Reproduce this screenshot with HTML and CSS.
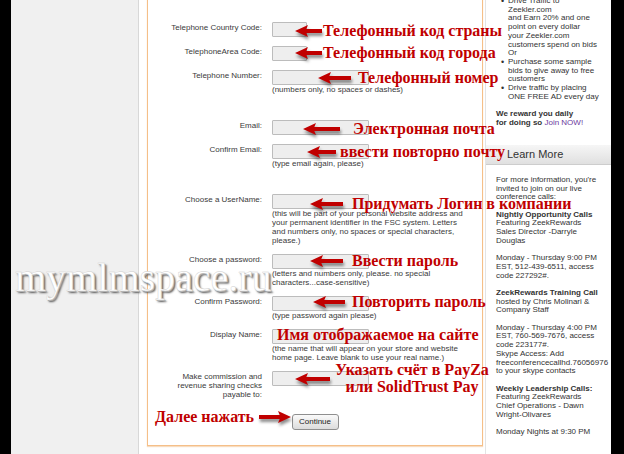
FILE: index.html
```html
<!DOCTYPE html>
<html lang="ru">
  <head>
    <meta charset="UTF-8" />
    <meta name="viewport" content="width=device-width, initial-scale=1.0" />
    <title>Регистрация</title>
    <link rel="stylesheet" href="styles.css">
  </head>
  <body>
    <div class="page">
      <div class="edge"></div>
      <div class="leftcol"></div>

      <div class="main">
        <form class="signup">
          <div class="row">
            <label>Telephone Country Code:</label>
            <div class="field"><input class="short" type="text" /></div>
          </div>
          <div class="row">
            <label>TelephoneArea Code:</label>
            <div class="field"><input class="short" type="text" /></div>
          </div>
          <div class="row spaced">
            <label>Telephone Number:</label>
            <div class="field">
              <input type="text" />
              <div class="hint">(numbers only, no spaces or dashes)</div>
            </div>
          </div>
          <div class="row">
            <label>Email:</label>
            <div class="field"><input type="text" /></div>
          </div>
          <div class="row spaced">
            <label>Confirm Email:</label>
            <div class="field">
              <input type="text" />
              <div class="hint">(type email again, please)</div>
            </div>
          </div>
          <div class="row">
            <label>Choose a UserName:</label>
            <div class="field">
              <input type="text" />
              <div class="hint">(this will be part of your personal website address and<br>your permanent identifier in the FSC system. Letters<br>and numbers only, no spaces or special characters,<br>please.)</div>
            </div>
          </div>
          <div class="row">
            <label>Choose a password:</label>
            <div class="field">
              <input type="password" />
              <div class="hint">(letters and numbers only, please. no special<br>characters...case-sensitive)</div>
            </div>
          </div>
          <div class="row">
            <label>Confirm Password:</label>
            <div class="field">
              <input type="password" />
              <div class="hint">(type password again please)</div>
            </div>
          </div>
          <div class="row">
            <label>Display Name:</label>
            <div class="field">
              <input type="text" />
              <div class="hint">(the name that will appear on your store and website<br>home page. Leave blank to use your real name.)</div>
            </div>
          </div>
          <div class="row last">
            <label>Make commission and<br>revenue sharing checks<br>payable to:</label>
            <div class="field"><input type="text" /></div>
          </div>
          <div class="actions">
            <button type="button">Continue</button>
          </div>
        </form>
      </div>

      <div class="sidebar">
        <ul class="perks">
          <li>Drive Traffic to<br>Zeekler.com<br>and Earn 20% and one<br>point on every dollar<br>your Zeekler.com<br>customers spend on bids<br>Or</li>
          <li>Purchase some sample<br>bids to give away to free<br>customers</li>
          <li>Drive traffic by placing<br>ONE FREE AD every day</li>
        </ul>
        <p class="reward">We reward you daily<br>for doing so <a href="#">Join NOW!</a></p>

        <div class="learn">Learn More</div>
        <div class="calls">
          <p>For more information, you're<br>invited to join on our live<br>conference calls:</p>
          <p><b>Nightly Opportunity Calls</b><br>Featuring ZeekRewards<br>Sales Director -Darryle<br>Douglas</p>
          <p>Monday - Thursday 9:00 PM<br>EST, 512-439-6511, access<br>code 227292#.</p>
          <p class="gap"><b>ZeekRewards Training Call</b><br>hosted by Chris Molinari &amp;<br>Company Staff</p>
          <p>Monday - Thursday 4:00 PM<br>EST, 760-569-7676, access<br>code 223177#.<br>Skype Access: Add<br>freeconferencecallhd.76056976<br>to your skype contacts</p>
          <p class="gap"><b>Weekly Leadership Calls:</b><br>Featuring ZeekRewards<br>Chief Operations - Dawn<br>Wright-Olivares</p>
          <p>Monday Nights at 9:30 PM</p>
        </div>
      </div>

      <div class="edge edge-right"></div>

      <!-- подсказки поверх формы -->
      <div class="note n1"><div class="arrow"><svg class="head" viewBox="0 0 13 12"><polygon points="0,6 13,0 10.5,6 13,12" /></svg><div class="shaft"></div></div><span>Телефонный код страны</span></div>
      <div class="note n2"><div class="arrow"><svg class="head" viewBox="0 0 13 12"><polygon points="0,6 13,0 10.5,6 13,12" /></svg><div class="shaft"></div></div><span>Телефонный код города</span></div>
      <div class="note n3"><div class="arrow"><svg class="head" viewBox="0 0 13 12"><polygon points="0,6 13,0 10.5,6 13,12" /></svg><div class="shaft"></div></div><span>Телефонный номер</span></div>
      <div class="note n4"><div class="arrow"><svg class="head" viewBox="0 0 13 12"><polygon points="0,6 13,0 10.5,6 13,12" /></svg><div class="shaft"></div></div><span>Электронная почта</span></div>
      <div class="note n5"><div class="arrow"><svg class="head" viewBox="0 0 13 12"><polygon points="0,6 13,0 10.5,6 13,12" /></svg><div class="shaft"></div></div><span>ввести повторно почту</span></div>
      <div class="note n6"><div class="arrow"><svg class="head" viewBox="0 0 13 12"><polygon points="0,6 13,0 10.5,6 13,12" /></svg><div class="shaft"></div></div><span>Придумать Логин в компании</span></div>
      <div class="note n7"><div class="arrow"><svg class="head" viewBox="0 0 13 12"><polygon points="0,6 13,0 10.5,6 13,12" /></svg><div class="shaft"></div></div><span>Ввести пароль</span></div>
      <div class="note n8"><div class="arrow"><svg class="head" viewBox="0 0 13 12"><polygon points="0,6 13,0 10.5,6 13,12" /></svg><div class="shaft"></div></div><span>Повторить пароль</span></div>
      <div class="note n9"><span>Имя отображаемое на сайте</span></div>
      <div class="note n10"><div class="arrow"><svg class="head" viewBox="0 0 13 12"><polygon points="0,6 13,0 10.5,6 13,12" /></svg><div class="shaft"></div></div></div>
      <div class="note-block">Указать счёт в PayZa<br>или SolidTrust Pay</div>
      <div class="note n11"><span>Далее нажать</span><div class="arrow right"><svg class="head" viewBox="0 0 13 12"><polygon points="0,6 13,0 10.5,6 13,12" /></svg><div class="shaft"></div></div></div>

      <div class="watermark">mymlmspace.ru</div>
    </div>
  </body>
</html>
```

FILE: styles.css
```css
/* General styles */
* {
  box-sizing: border-box;
}

html,
body {
  margin: 0;
  padding: 0;
}

body {
  font-family: "Liberation Sans", Arial, sans-serif;
  background-color: white;
  color: #333;
}

.page {
  position: relative;
  display: flex;
  height: 454px;
  overflow: hidden;
}

.edge {
  width: 11px;
  flex-shrink: 0;
  background-color: black;
}

.edge-right {
  width: 13px;
}

.leftcol {
  width: 128px;
  flex-shrink: 0;
  background-color: #f0f0f0;
  border-right: 1px solid #d8d8d8;
}

/* Form */
.main {
  width: 344px;
  flex-shrink: 0;
  padding-left: 8px;
}

.signup {
  width: 336px;
  margin: -10px 0 0;
  padding: 31px 10px 15px 0;
  border: 1px solid #f5bf88;
  box-shadow: 0 1px 1px #f8dcbf;
}

.row {
  display: grid;
  grid-template-columns: 114px 1fr;
  column-gap: 10px;
  margin-bottom: 9px;
}

.row.spaced {
  margin-bottom: 26px;
}

.row.last {
  margin-bottom: 11px;
}

.row label {
  text-align: right;
  font-size: 8px;
  line-height: 9px;
  padding-top: 1px;
  color: #3a3a3a;
}

.row input {
  display: block;
  width: 97px;
  height: 15px;
  margin: 0;
  padding: 0;
  border: 1px solid #bcbcbc;
  border-radius: 1px;
  background-color: #eeeeee;
}

.row input.short {
  width: 35px;
}

.hint {
  font-size: 8px;
  line-height: 9px;
  color: #3a3a3a;
  white-space: nowrap;
}

.actions {
  padding-left: 10px;
  text-align: center;
}

.actions button {
  width: 47px;
  height: 16px;
  padding: 0;
  font-family: "Liberation Sans", Arial, sans-serif;
  font-size: 8px;
  color: #222;
  background: linear-gradient(#fafafa, #dcdcdc);
  border: 1px solid #8f8f8f;
  border-radius: 3px;
}

/* Sidebar */
.sidebar {
  width: 126px;
  flex-shrink: 0;
  margin-left: 2px;
  border-left: 1px solid #e4e4e4;
  overflow: hidden;
  font-size: 8px;
  line-height: 8.7px;
  white-space: nowrap;
}

.perks {
  margin: -3px 0 0;
  padding-left: 22px;
  list-style: none;
}

.perks li {
  position: relative;
}

.perks li::before {
  content: "\2022";
  position: absolute;
  left: -7px;
  top: 0;
  font-size: 9px;
}

.reward {
  margin: 9px 0 0 10px;
  font-weight: bold;
}

.reward a {
  color: #6b3a9e;
  font-weight: normal;
  text-decoration: none;
}

.learn {
  margin-top: 17px;
  height: 20px;
  padding-left: 21px;
  font-size: 11px;
  line-height: 19px;
  color: #333;
  background: linear-gradient(#f6f6f6, #e0e0e0);
  border-bottom: 1px solid #cdcdcd;
}

.calls {
  padding: 11px 0 0 10px;
}

.calls p {
  margin: 0 0 8.7px;
}

.calls p.gap {
  margin-top: 7px;
}

/* Annotations over the form */
.note {
  position: absolute;
  display: flex;
  align-items: center;
  height: 20px;
  font-family: "Liberation Serif", "Times New Roman", serif;
  font-weight: bold;
  font-size: 16px;
  color: #c00000;
  white-space: nowrap;
}

.arrow {
  display: flex;
  align-items: center;
  height: 12px;
  filter: drop-shadow(1px 3px 1.5px rgba(0, 0, 0, 0.45));
}

.arrow .head {
  width: 13px;
  height: 12px;
  flex-shrink: 0;
  fill: #c00000;
}

.arrow .shaft {
  flex: 1;
  height: 3.5px;
  margin-left: -3px;
  background-color: #c00000;
}

.arrow.right {
  flex-direction: row-reverse;
}

.arrow.right .head {
  transform: scaleX(-1);
}

.arrow.right .shaft {
  margin: 0 -3px 0 0;
}

.n1 { left: 295px; top: 21px; }
.n1 .arrow { width: 27px; margin-right: 1px; }
.n2 { left: 295px; top: 43px; }
.n2 .arrow { width: 27px; margin-right: 1px; }
.n3 { left: 318px; top: 68px; }
.n3 .arrow { width: 33px; margin-right: 7px; }
.n4 { left: 303px; top: 119px; }
.n4 .arrow { width: 37px; margin-right: 13px; }
.n5 { left: 307px; top: 142px; }
.n5 .arrow { width: 29px; margin-right: 4px; }
.n6 { left: 310px; top: 194px; }
.n6 .arrow { width: 33px; margin-right: 9px; }
.n7 { left: 310px; top: 251px; }
.n7 .arrow { width: 33px; margin-right: 9px; }
.n8 { left: 313px; top: 292px; }
.n8 .arrow { width: 32px; margin-right: 7px; }
.n9 { left: 277px; top: 325px; }
.n10 { left: 295px; top: 369px; }
.n10 .arrow { width: 35px; }
.n11 { left: 155px; top: 407px; }
.n11 .arrow { width: 32px; margin-left: 5px; }

.note-block {
  position: absolute;
  left: 330px;
  top: 361px;
  width: 164px;
  text-align: center;
  font-family: "Liberation Serif", "Times New Roman", serif;
  font-weight: bold;
  font-size: 16px;
  line-height: 17px;
  color: #c00000;
  white-space: nowrap;
}

.watermark {
  position: absolute;
  left: 15px;
  top: 258px;
  font-family: "Liberation Serif", "Times New Roman", serif;
  font-size: 40px;
  line-height: 40px;
  color: white;
  -webkit-text-stroke: 0.4px #cfcfcf;
  text-shadow: 1px 1px 0 #aaa, 2px 2px 2px #555;
}
```
